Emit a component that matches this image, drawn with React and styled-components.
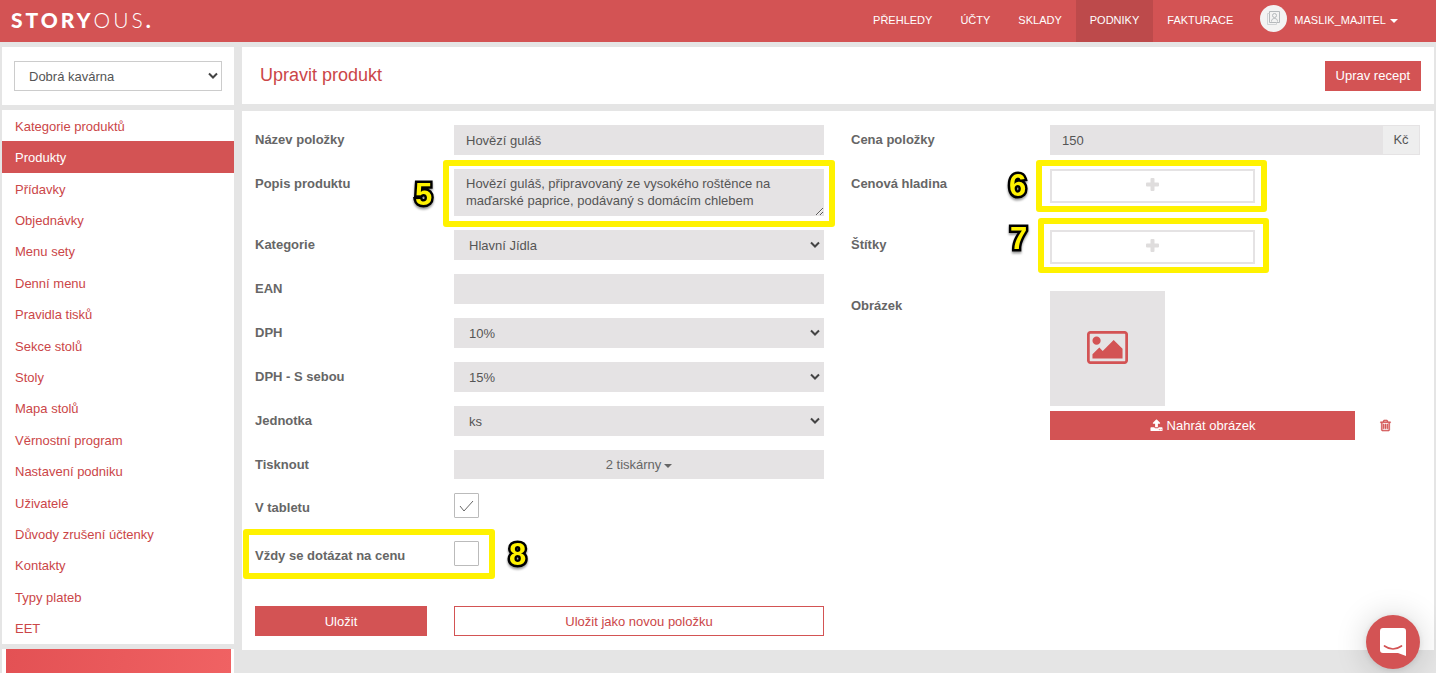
import React from 'react';
import styled, { createGlobalStyle } from 'styled-components';

const GlobalStyle = createGlobalStyle`
  * {
    box-sizing: border-box;
  }

  body {
    margin: 0;
    background: #e5e5e5;
    color: #555;
    font-family: 'Liberation Sans', Helvetica, Arial, sans-serif;
    font-size: 13px;
    line-height: 17px;
  }

  button, input, select, textarea {
    margin: 0;
    border-radius: 0;
    font: inherit;
    color: inherit;
  }
`;

const Header = styled.header`
  display: flex;
  justify-content: space-between;
  height: 42px;
  padding-right: 38px;
  background: #d35354;
`;

const Logo = styled.a`
  display: flex;
  align-items: center;
  padding: 0 0 2px 11px;
  color: #fff;
  font-family: Lato, sans-serif;
  font-size: 21px;
  font-weight: 300;
  line-height: 40px;
  letter-spacing: 3px;
  text-decoration: none;

  b {
    font-weight: 900;
  }
`;

const TopNav = styled.nav`
  display: flex;
`;

const TopLink = styled.a`
  display: flex;
  align-items: center;
  padding: 0 14px 2px;
  background: ${({ $active }) => ($active ? '#bd4a4b' : 'transparent')};
  color: #fff;
  font-size: 11px;
  text-decoration: none;
`;

const UserButton = styled.button`
  display: flex;
  align-items: center;
  gap: 7px;
  margin-left: 13px;
  padding: 0 0 2px;
  border: 0;
  background: none;
  color: #fff;
  font-size: 11px;
`;

const Avatar = styled.span`
  display: flex;
  align-items: center;
  justify-content: center;
  width: 27px;
  height: 27px;
  margin-bottom: 4px;
  border-radius: 50%;
  background: #f3f3f3;
`;

const Caret = styled.span`
  display: inline-block;
  margin-left: ${({ $gap }) => $gap || 0}px;
  border-top: 4px solid currentColor;
  border-left: 4px solid transparent;
  border-right: 4px solid transparent;
  vertical-align: middle;
`;

const Page = styled.div`
  display: grid;
  grid-template-columns: 232px 1fr;
  align-items: start;
  gap: 8px;
  padding: 5px 2px 0;
`;

const Sidebar = styled.aside`
  display: flex;
  flex-direction: column;
  gap: 5px;
`;

const VenueBox = styled.div`
  padding: 14px 12px;
  background: #fff;
`;

const SideNav = styled.ul`
  display: grid;
  min-height: 534px;
  margin: 0;
  padding: 0;
  background: #fff;
  list-style: none;
`;

const SideLink = styled.a`
  display: flex;
  align-items: center;
  height: 100%;
  padding: 1px 13px 0;
  background: ${({ $active }) => ($active ? '#d35354' : 'transparent')};
  color: ${({ $active }) => ($active ? '#fff' : '#cb4648')};
  text-decoration: none;
`;

const Promo = styled.div`
  height: 24px;
  border: solid #fff;
  border-width: 0 3px 0 4px;
  background: linear-gradient(100deg, #e35154, #f06263);
`;

const Main = styled.main`
  display: flex;
  flex-direction: column;
  gap: 7px;
`;

const TitlePanel = styled.section`
  display: flex;
  align-items: center;
  justify-content: space-between;
  min-height: 57px;
  padding: 0 13px 0 18px;
  background: #fff;
`;

const Title = styled.h1`
  margin: 0;
  color: #cb4648;
  font-size: 18px;
  font-weight: normal;
`;

const Button = styled.button`
  display: flex;
  align-items: center;
  justify-content: center;
  gap: 4px;
  height: 30px;
  padding: 0 10px;
  border: 1px solid #d35354;
  background: ${({ $outline }) => ($outline ? '#fff' : '#d35354')};
  color: ${({ $outline }) => ($outline ? '#cb4648' : '#fff')};
`;

const FormPanel = styled.form`
  display: grid;
  grid-template-columns: 1fr 1fr;
  padding: 14px 0;
  background: #fff;
`;

const Column = styled.div`
  display: flex;
  flex-direction: column;
  gap: 14px;
  padding: 0 14px 0 13px;
`;

const Row = styled.div`
  position: relative;
  display: grid;
  grid-template-columns: 199px 1fr;
  align-items: start;
  min-height: ${({ $height }) => $height || 30}px;
`;

const Label = styled.label`
  padding-top: 6px;
  color: #666;
  font-weight: bold;
`;

const Field = styled.div`
  position: relative;
  display: flex;
`;

const Input = styled.input`
  flex: 1;
  min-width: 0;
  height: 30px;
  padding: 1px 12px 0;
  border: 0;
  background: #e5e3e4;
`;

const Textarea = styled.textarea`
  display: block;
  width: 100%;
  height: 47px;
  padding: 6px 12px;
  border: 0;
  background: #e5e3e4;
  resize: vertical;
  overflow: hidden;
`;

const Select = styled.select`
  width: 100%;
  height: 30px;
  padding: 0 24px 0 ${({ $bordered }) => ($bordered ? 14 : 15)}px;
  border: ${({ $bordered }) => ($bordered ? '1px solid #ccc' : '0')};
  background: ${({ $bordered }) => ($bordered ? '#fff' : '#e5e3e4')};
  appearance: none;
`;

const SelectArrow = styled.svg`
  position: absolute;
  top: 11px;
  right: 4px;
  width: 10px;
  height: 8px;
  pointer-events: none;
`;

const Unit = styled.span`
  width: 38px;
  height: 30px;
  padding-top: 5px;
  border: 1px solid #e5e3e4;
  background: #eee;
  text-align: center;
`;

const PrinterButton = styled.button`
  width: 100%;
  height: 29px;
  border: 0;
  background: #e5e3e4;
  color: #666;
`;

const CheckBox = styled.input`
  appearance: none;
  width: 25px;
  height: 25px;
  border: 1px solid #bbb;
  border-radius: 1px;
  background: #fff;
`;

const CheckMark = styled.svg`
  position: absolute;
  top: 7px;
  left: 5px;
  width: 15px;
  height: 12px;
  pointer-events: none;
`;

const AddButton = styled.button`
  display: flex;
  align-items: center;
  justify-content: center;
  width: 205px;
  height: 34px;
  padding: 0 0 4px;
  border: 2px solid #e5e3e4;
  background: #fff;
`;

const ImageField = styled.div`
  display: grid;
  grid-template-columns: 305px 60px;
  gap: 5px 0;
`;

const ImagePreview = styled.div`
  display: flex;
  grid-column: span 2;
  align-items: center;
  justify-content: center;
  width: 115px;
  height: 115px;
  padding-bottom: 2px;
  background: #e5e3e4;
`;

const UploadButton = styled(Button)`
  height: 29px;
`;

const IconButton = styled.button`
  padding: 0;
  border: 0;
  background: none;
  line-height: 0;
`;

const Actions = styled.div`
  display: grid;
  grid-template-columns: 172px 1fr;
  gap: 27px;
  padding-top: 17px;
`;

const Highlight = styled.span`
  position: absolute;
  top: ${({ $top }) => $top}px;
  right: ${({ $right }) => $right}px;
  bottom: ${({ $bottom }) => $bottom}px;
  left: ${({ $left }) => $left}px;
  border: 6px solid #fff200;
  border-radius: 3px;
  pointer-events: none;
`;

const StepNumber = styled.span`
  position: absolute;
  top: ${({ $top }) => $top}px;
  left: ${({ $left }) => $left}px;
  color: #fff200;
  font-size: 31px;
  font-weight: bold;
  line-height: 32px;
  paint-order: stroke fill;
  -webkit-text-stroke: 5px #000;
  filter: drop-shadow(0 2px 1px rgba(0, 0, 0, 0.4));
`;

const ChatButton = styled.button`
  position: fixed;
  right: 16px;
  bottom: 4px;
  width: 54px;
  height: 54px;
  padding: 0;
  border: 0;
  border-radius: 50%;
  background: #d35354;
  box-shadow: 0 1px 6px rgba(0, 0, 0, 0.1), 0 2px 32px rgba(0, 0, 0, 0.18);
  line-height: 0;
`;

const topLinks = ['PŘEHLEDY', 'ÚČTY', 'SKLADY', 'PODNIKY', 'FAKTURACE'];

const sideLinks = [
  'Kategorie produktů',
  'Produkty',
  'Přídavky',
  'Objednávky',
  'Menu sety',
  'Denní menu',
  'Pravidla tisků',
  'Sekce stolů',
  'Stoly',
  'Mapa stolů',
  'Věrnostní program',
  'Nastavení podniku',
  'Uživatelé',
  'Důvody zrušení účtenky',
  'Kontakty',
  'Typy plateb',
  'EET',
];

const AvatarIcon = () => (
  <svg width="15" height="16" viewBox="0 0 15 16" fill="none" stroke="#b5b9bc">
    <path d="M3.5 1.5h10v11h-10z" />
    <path d="M3.5 3.5h-2v11h9v-2" stroke="#d0d3d5" />
    <circle cx="8.5" cy="5.5" r="2" />
    <path d="M5.5 11.5c0-2 1-3 3-3s3 1 3 3" />
  </svg>
);

const PlusIcon = () => (
  <svg width="13" height="13" viewBox="0 0 13 13" fill="#dfdddd">
    <path d="M5.5 0h2q1 0 1 1v3.500h3.500q1 0 1 1v2q0 1-1 1h-3.500v3.500q0 1-1 1h-2q-1 0-1-1v-3.500h-3.500q-1 0-1-1v-2q0-1 1-1h3.500v-3.500q0-1 1-1z" />
  </svg>
);

const PictureIcon = () => (
  <svg width="41" height="33" viewBox="0 0 1920 1536" fill="#d35354">
    <path d="M640 448q0 80-56 136t-136 56-136-56-56-136 56-136 136-56 136 56 56 136zm1024 384v448h-1408v-192l320-320 160 160 512-512zm96-704h-1600q-13 0-22.5 9.5t-9.5 22.500v1216q0 13 9.500 22.500t22.500 9.500h1600q13 0 22.500-9.500t9.500-22.500v-1216q0-13-9.500-22.500t-22.500-9.500zm160 32v1216q0 66-47 113t-113 47h-1600q-66 0-113-47t-47-113v-1216q0-66 47-113t113-47h1600q66 0 113 47t47 113z" />
  </svg>
);

const UploadIcon = () => (
  <svg width="13" height="13" viewBox="0 0 1792 1792" fill="currentColor">
    <path d="M1344 1472q0-26-19-45t-45-19-45 19-19 45 19 45 45 19 45-19 19-45zm256 0q0-26-19-45t-45-19-45 19-19 45 19 45 45 19 45-19 19-45zm128-224v320q0 40-28 68t-68 28h-1472q-40 0-68-28t-28-68v-320q0-40 28-68t68-28h427q21 56 70.500 92t110.500 36h256q61 0 110.500-36t70.500-92h427q40 0 68 28t28 68zm-325-648q-17 40-59 40h-256v448q0 26-19 45t-45 19h-256q-26 0-45-19t-19-45v-448h-256q-42 0-59-40-17-39 14-69l448-448q18-19 45-19t45 19l448 448q31 30 14 69z" />
  </svg>
);

const TrashIcon = () => (
  <svg width="13" height="13" viewBox="0 0 1792 1792" fill="#d35354" stroke="#d35354" strokeWidth="70">
    <path d="M704 736v576q0 14-9 23t-23 9h-64q-14 0-23-9t-9-23v-576q0-14 9-23t23-9h64q14 0 23 9t9 23zm256 0v576q0 14-9 23t-23 9h-64q-14 0-23-9t-9-23v-576q0-14 9-23t23-9h64q14 0 23 9t9 23zm256 0v576q0 14-9 23t-23 9h-64q-14 0-23-9t-9-23v-576q0-14 9-23t23-9h64q14 0 23 9t9 23zm128 724v-948h-896v948q0 22 7 40.500t14.500 27 10.500 8.500h832q3 0 10.500-8.500t14.500-27 7-40.500zm-672-1076h448l-48-117q-7-9-17-11h-317q-10 2-17 11zm928 32v64q0 14-9 23t-23 9h-96v948q0 83-47 143.500t-113 60.500h-832q-66 0-113-58.500t-47-141.500v-952h-96q-14 0-23-9t-9-23v-64q0-14 9-23t23-9h309l70-167q15-37 54-63t79-26h320q40 0 79 26t54 63l70 167h309q14 0 23 9t9 23z" />
  </svg>
);

const ChatIcon = () => (
  <svg width="26" height="30" viewBox="0 0 26 30">
    <path d="M3 1h20q3 0 3 3v25l-8-3H3q-3 0-3-3V4q0-3 3-3z" fill="#fff" />
    <path d="M4.500 19q8.500 6 17 0" fill="none" stroke="#d35354" strokeWidth="1.700" strokeLinecap="round" />
  </svg>
);

const Dropdown = ({ id, value, bordered, label }) => (
  <Field>
    <Select id={id} defaultValue={value} $bordered={bordered} aria-label={label}>
      <option>{value}</option>
    </Select>
    <SelectArrow viewBox="0 0 10 8" fill="none" stroke="#444" strokeWidth="2">
      <path d="M1 1.500l4 4 4-4" />
    </SelectArrow>
  </Field>
);

const SelectRow = ({ id, label, value }) => (
  <Row>
    <Label htmlFor={id}>{label}</Label>
    <Dropdown id={id} value={value} />
  </Row>
);

const App = () => {
  return (
    <>
      <GlobalStyle />
      <Header>
        <Logo href="#">
          <b>STORY</b>OUS<b>.</b>
        </Logo>
        <TopNav>
          {topLinks.map((text) => (
            <TopLink key={text} href="#" $active={text === 'PODNIKY'}>
              {text}
            </TopLink>
          ))}
          <UserButton type="button">
            <Avatar>
              <AvatarIcon />
            </Avatar>
            <span>
              MASLIK_MAJITEL
              <Caret $gap={4} />
            </span>
          </UserButton>
        </TopNav>
      </Header>

      <Page>
        <Sidebar>
          <VenueBox>
            <Dropdown id="venue" label="Podnik" value="Dobrá kavárna" bordered />
          </VenueBox>
          <SideNav>
            {sideLinks.map((text) => (
              <li key={text}>
                <SideLink href="#" $active={text === 'Produkty'}>
                  {text}
                </SideLink>
              </li>
            ))}
          </SideNav>
          <Promo />
        </Sidebar>

        <Main>
          <TitlePanel>
            <Title>Upravit produkt</Title>
            <Button type="button">Uprav recept</Button>
          </TitlePanel>

          <FormPanel>
            <Column>
              <Row>
                <Label htmlFor="name">Název položky</Label>
                <Field>
                  <Input id="name" defaultValue="Hovězí guláš" />
                </Field>
              </Row>
              <Row $height={47}>
                <Label htmlFor="description">Popis produktu</Label>
                <Field>
                  <Textarea
                    id="description"
                    defaultValue={'Hovězí guláš, připravovaný ze vysokého roštěnce na\nmaďarské paprice, podávaný s domácím chlebem'}
                  />
                  <Highlight $top={-9} $right={-11} $bottom={-11} $left={-11} />
                  <StepNumber $top={10} $left={-39}>5</StepNumber>
                </Field>
              </Row>
              <SelectRow id="category" label="Kategorie" value="Hlavní Jídla" />
              <Row>
                <Label htmlFor="ean">EAN</Label>
                <Field>
                  <Input id="ean" />
                </Field>
              </Row>
              <SelectRow id="vat" label="DPH" value="10%" />
              <SelectRow id="vat-takeaway" label="DPH - S sebou" value="15%" />
              <SelectRow id="unit" label="Jednotka" value="ks" />
              <Row $height={29}>
                <Label htmlFor="printers">Tisknout</Label>
                <PrinterButton id="printers" type="button">
                  2 tiskárny
                  <Caret $gap={3} />
                </PrinterButton>
              </Row>
              <Row $height={34}>
                <Label htmlFor="tablet">V tabletu</Label>
                <Field>
                  <CheckBox id="tablet" type="checkbox" defaultChecked />
                  <CheckMark viewBox="0 0 15 12" fill="none" stroke="#666">
                    <path d="M1 6l4 5 9-10" />
                  </CheckMark>
                </Field>
              </Row>
              <Row $height={34}>
                <Label htmlFor="ask-price">Vždy se dotázat na cenu</Label>
                <Field>
                  <CheckBox id="ask-price" type="checkbox" />
                </Field>
                <Highlight $top={-12} $right={329} $bottom={-4} $left={-12} />
                <StepNumber $top={-2} $left={254}>8</StepNumber>
              </Row>
              <Actions>
                <Button type="submit">Uložit</Button>
                <Button type="button" $outline>
                  Uložit jako novou položku
                </Button>
              </Actions>
            </Column>

            <Column>
              <Row>
                <Label htmlFor="price">Cena položky</Label>
                <Field>
                  <Input id="price" defaultValue="150" />
                  <Unit>Kč</Unit>
                </Field>
              </Row>
              <Row $height={47}>
                <Label htmlFor="price-level">Cenová hladina</Label>
                <Field>
                  <AddButton id="price-level" type="button" aria-label="Přidat cenovou hladinu">
                    <PlusIcon />
                  </AddButton>
                  <Highlight $top={-9} $right={153} $bottom={-9} $left={-14} />
                  <StepNumber $top={1} $left={-41}>6</StepNumber>
                </Field>
              </Row>
              <Row $height={47}>
                <Label htmlFor="tags">Štítky</Label>
                <Field>
                  <AddButton id="tags" type="button" aria-label="Přidat štítek">
                    <PlusIcon />
                  </AddButton>
                  <Highlight $top={-12} $right={151} $bottom={-9} $left={-12} />
                  <StepNumber $top={-7} $left={-40}>7</StepNumber>
                </Field>
              </Row>
              <Row>
                <Label htmlFor="upload">Obrázek</Label>
                <ImageField>
                  <ImagePreview>
                    <PictureIcon />
                  </ImagePreview>
                  <UploadButton id="upload" type="button">
                    <UploadIcon />
                    Nahrát obrázek
                  </UploadButton>
                  <IconButton type="button" aria-label="Smazat obrázek">
                    <TrashIcon />
                  </IconButton>
                </ImageField>
              </Row>
            </Column>
          </FormPanel>
        </Main>
      </Page>

      <ChatButton type="button" aria-label="Chat">
        <ChatIcon />
      </ChatButton>
    </>
  );
};

export default App;
